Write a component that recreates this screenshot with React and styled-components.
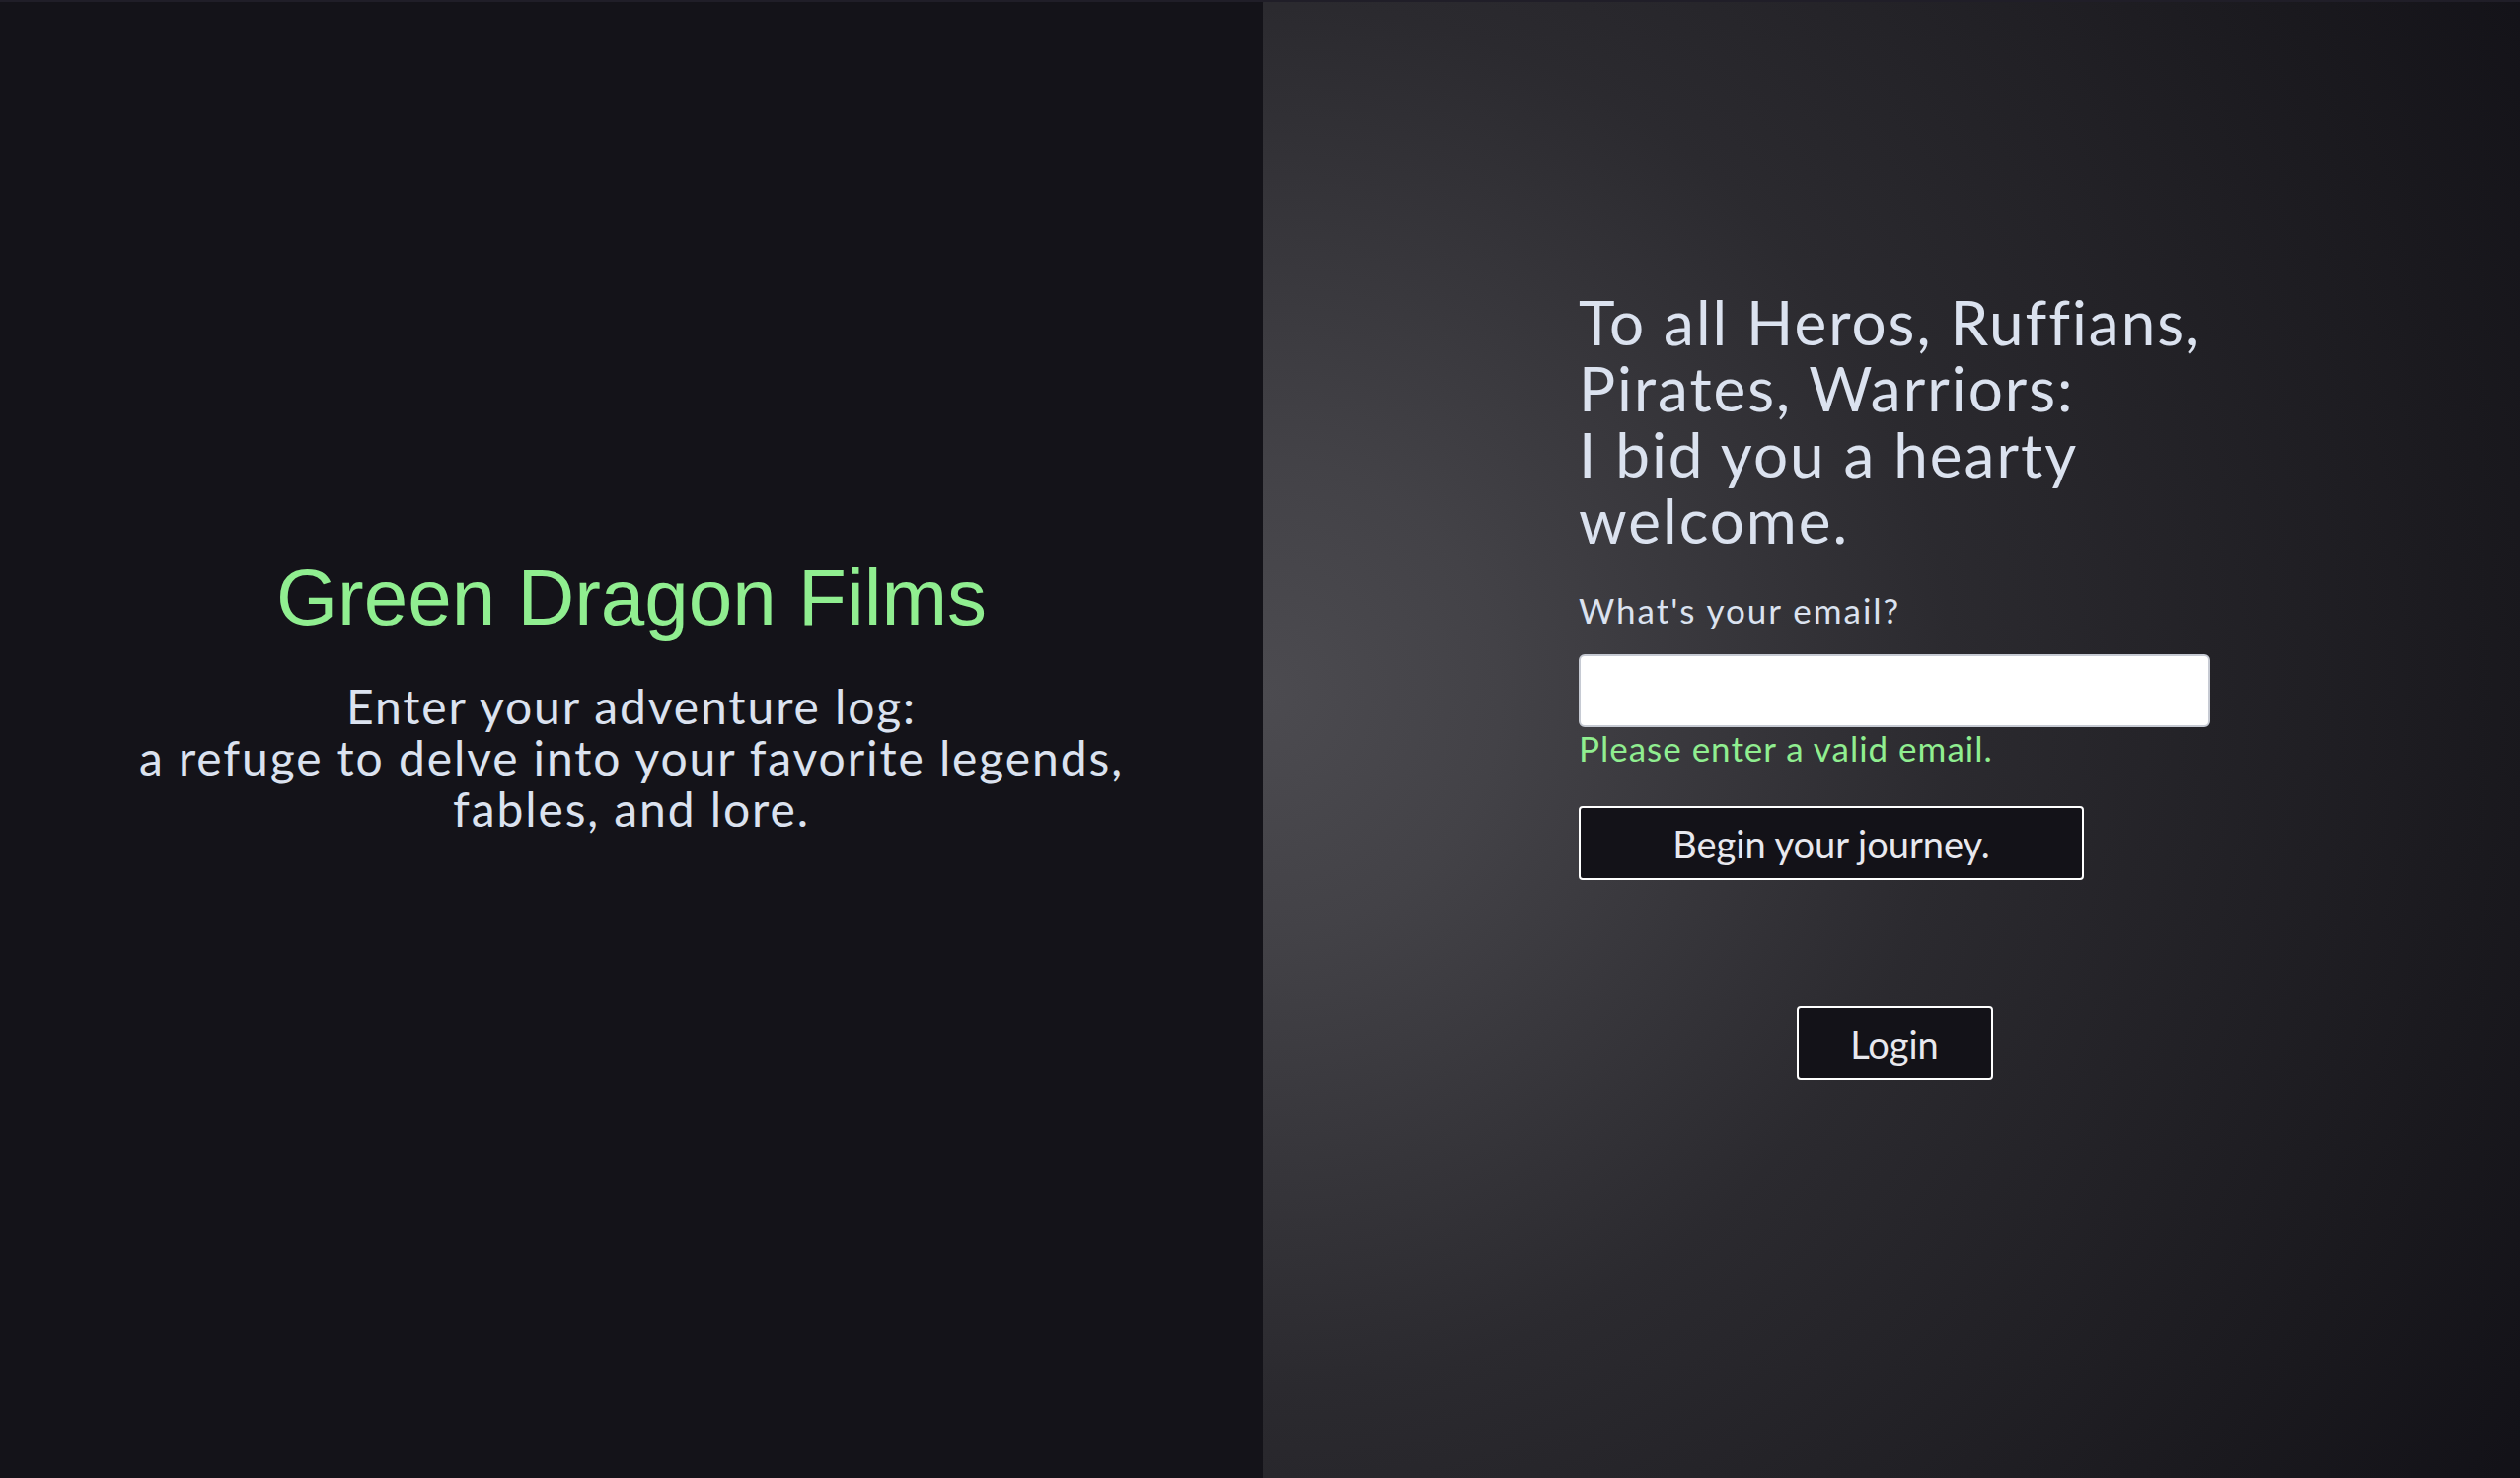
import React, { useState } from 'react';
import styled, { createGlobalStyle } from 'styled-components';

const GlobalStyle = createGlobalStyle`
  html, body {
    margin: 0;
    padding: 0;
    background: #141319;
  }
  * {
    box-sizing: border-box;
  }
`;

const Page = styled.div`
  display: grid;
  grid-template-columns: 1280px 1fr;
  height: 1498px;
  border-top: 2px solid #201e28;
  font-family: Lato, "Open Sans", sans-serif;
  color: #dbe2ef;
`;

const Intro = styled.section`
  display: flex;
  flex-direction: column;
  align-items: center;
  padding-top: 558px;
  background: #141319;
  text-align: center;
`;

const Title = styled.h1`
  margin: 0;
  font-family: "Liberation Sans", Arial, sans-serif;
  font-weight: 400;
  font-size: 80px;
  color: #90ee90;
`;

const Tagline = styled.p`
  margin: 38px 0 0;
  font-size: 48px;
  line-height: 52px;
  font-weight: 400;
  letter-spacing: 1.9px;
`;

const Side = styled.section`
  display: flex;
  justify-content: center;
  padding: 291px 0 0 6px;
  background: radial-gradient(
    circle at 0 47%,
    #4c4b50 0,
    #434247 240px,
    #2b2a2f 700px,
    #1a191e 1250px,
    #131218 1480px
  );
`;

const Form = styled.form`
  display: flex;
  flex-direction: column;
  width: 640px;
`;

const Heading = styled.h2`
  margin: 0;
  font-size: 62px;
  line-height: 67px;
  font-weight: 400;
  letter-spacing: 2px;
  white-space: nowrap;
`;

const Label = styled.label`
  margin-top: 36px;
  font-size: 35px;
  line-height: 42px;
  font-weight: 400;
  letter-spacing: 2px;
`;

const EmailInput = styled.input`
  margin-top: 24px;
  height: 74px;
  width: 100%;
  padding: 0 16px;
  border: 2px solid #c6cad3;
  border-radius: 6px;
  background: #ffffff;
  font-family: inherit;
  font-size: 32px;
  outline: none;
`;

const ErrorText = styled.span`
  font-size: 35px;
  line-height: 42px;
  font-weight: 400;
  letter-spacing: 1px;
  color: #90ee90;
`;

const Button = styled.button`
  align-self: ${(p) => (p.$center ? 'center' : 'flex-start')};
  margin-top: ${(p) => p.$gap}px;
  width: ${(p) => p.$width}px;
  height: 75px;
  border: 2px solid #ffffff;
  border-radius: 4px;
  background: #131218;
  color: #e8e8ee;
  font-family: Lato, "Open Sans", sans-serif;
  font-size: 38px;
  font-weight: 400;
  cursor: pointer;
`;

export default function App() {
  const [email, setEmail] = useState('');

  return (
    <>
      <GlobalStyle />
      <Page>
        <Intro>
          <Title>Green Dragon Films</Title>
          <Tagline>
            Enter your adventure log:
            <br />
            a refuge to delve into your favorite legends,
            <br />
            fables, and lore.
          </Tagline>
        </Intro>
        <Side>
          <Form onSubmit={(e) => e.preventDefault()}>
            <Heading>
              To all Heros, Ruffians,
              <br />
              Pirates, Warriors:
              <br />
              I bid you a hearty
              <br />
              welcome.
            </Heading>
            <Label htmlFor="email">What's your email?</Label>
            <EmailInput
              id="email"
              type="email"
              value={email}
              onChange={(e) => setEmail(e.target.value)}
            />
            <ErrorText>Please enter a valid email.</ErrorText>
            <Button type="submit" $gap={38} $width={512}>
              Begin your journey.
            </Button>
            <Button type="button" $center $gap={128} $width={199}>
              Login
            </Button>
          </Form>
        </Side>
      </Page>
    </>
  );
}
